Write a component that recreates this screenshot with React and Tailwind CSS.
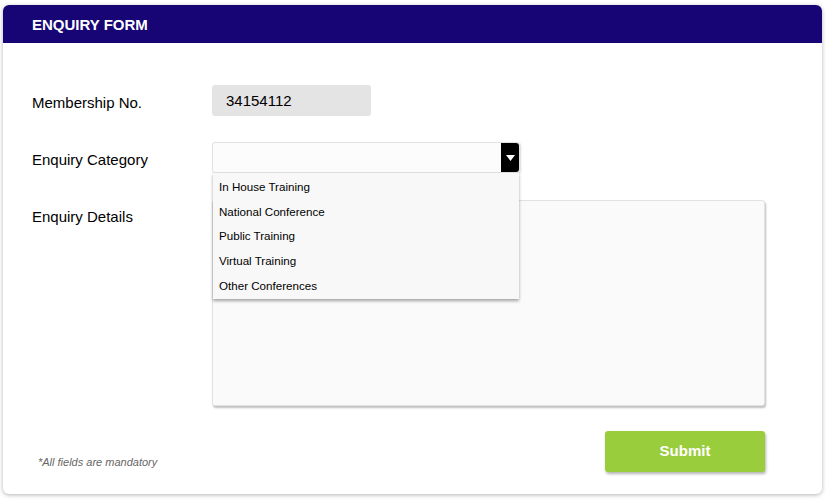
import { useState } from "react";

const categories = [
    "In House Training",
    "National Conference",
    "Public Training",
    "Virtual Training",
    "Other Conferences",
];

function App() {
    const [membership] = useState("34154112");
    const [open] = useState(true);

    return (
        <div className="min-h-screen bg-white pt-[5px] pl-[3px] pr-[4px] pb-[6px] font-['Liberation_Sans',Arial,sans-serif]">
            <div className="bg-white rounded-md shadow-[0_1px_4px_rgba(0,0,0,0.3)]">
                <div className="h-[38px] bg-[#170575] rounded-t-md flex items-center pl-[29px] pt-[3px]">
                    <h1 className="text-white font-bold text-[15px]">ENQUIRY FORM</h1>
                </div>

                <form className="pl-[29px] pr-[57px] pt-[42px] pb-[22px]">
                    <div className="flex items-center">
                        <label className="w-[180px] text-[15px] text-black pt-[5px]">
                            Membership No.
                        </label>
                        <div className="w-[159px] h-[31px] bg-[#e4e4e4] rounded-[3px] flex items-center pl-[14px] pt-[2px] text-[15px] text-black">
                            {membership}
                        </div>
                    </div>

                    <div className="flex items-center mt-[26px]">
                        <label className="w-[180px] text-[15px] text-black pt-[5px]">
                            Enquiry Category
                        </label>
                        <div className="relative">
                            <div className="w-[308px] h-[31px] bg-[#fcfcfc] border border-[#e2e2e2] rounded-[3px] shadow-[1px_1px_2px_rgba(0,0,0,0.15)] flex justify-end">
                                <div className="w-[18px] h-full bg-black rounded-r-[3px] flex items-center justify-center">
                                    <svg width="9" height="6" viewBox="0 0 9 6">
                                        <path d="M0 0 L9 0 L4.5 6 Z" fill="#fff" />
                                    </svg>
                                </div>
                            </div>
                            {open && (
                                <ul className="absolute left-[1px] top-[31px] w-[306px] bg-[#f8f8f8] shadow-[0_2px_3px_rgba(0,0,0,0.35)] z-10 pt-[1px] pb-[1px]">
                                    {categories.map((c) => (
                                        <li
                                            key={c}
                                            className="h-[24.8px] flex items-center pl-[6px] text-[11.6px] text-black"
                                        >
                                            {c}
                                        </li>
                                    ))}
                                </ul>
                            )}
                        </div>
                    </div>

                    <div className="flex items-start mt-[27px]">
                        <label className="w-[180px] text-[15px] text-black pt-[6px]">
                            Enquiry Details
                        </label>
                        <textarea className="w-[554px] h-[206px] bg-[#fafafa] border border-[#e2e2e2] rounded-[3px] shadow-[1px_2px_2px_rgba(0,0,0,0.25)] resize-none outline-none" />
                    </div>

                    <div className="flex items-center justify-between mt-[25px]">
                        <p className="italic text-[11px] text-[#666] pl-[6px] pt-[22px]">
                            *All fields are mandatory
                        </p>
                        <button
                            type="button"
                            className="w-[160px] h-[41px] bg-[#9acd3c] text-white font-bold text-[15px] rounded-[3px] shadow-[1px_2px_3px_rgba(0,0,0,0.3)]"
                        >
                            Submit
                        </button>
                    </div>
                </form>
            </div>
        </div>
    );
}

export default App;
